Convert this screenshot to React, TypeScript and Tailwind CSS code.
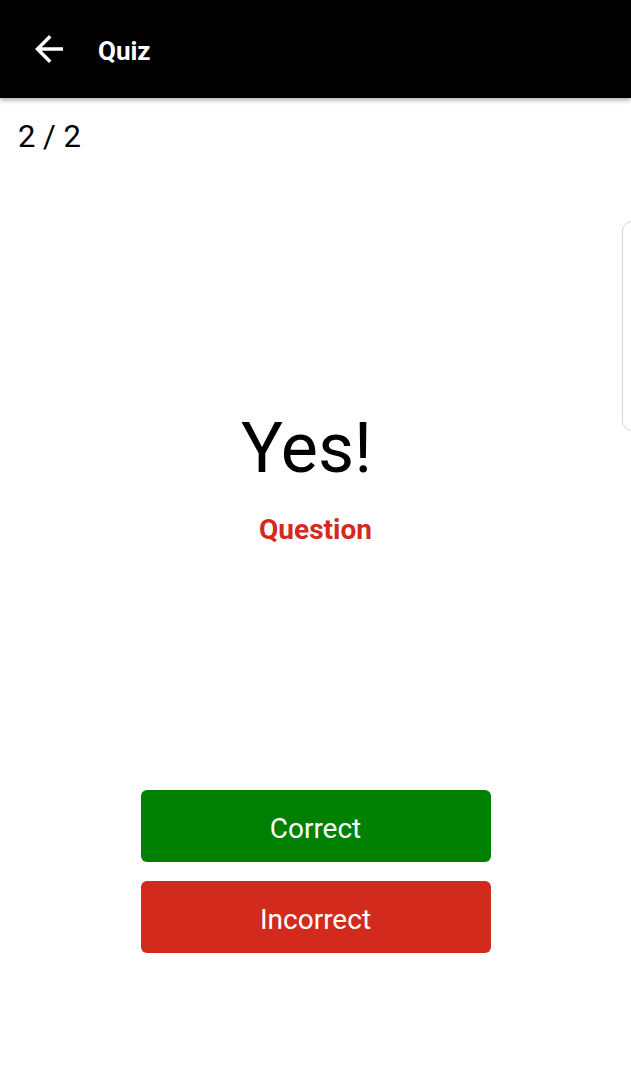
export default function App() {
    return (
        <div className="relative h-[1080px] w-[631px] overflow-hidden bg-white font-['Roboto',sans-serif]">
            <header className="relative z-10 flex h-[98px] items-center bg-black shadow-[0_2px_5px_rgba(0,0,0,0.35)]">
                <svg viewBox="0 0 24 24" className="ml-[28px] h-[42px] w-[42px] fill-white">
                    <path d="M20 11H7.83l5.59-5.59L12 4l-8 8 8 8 1.41-1.41L7.83 13H20v-2z" />
                </svg>
                <h1 className="ml-[28px] mt-[4px] text-[26px] font-bold text-white">Quiz</h1>
            </header>

            <div className="px-[18px] pt-[19px] text-[31px] leading-[40px] text-black">2 / 2</div>

            {/* next card peeking in from the right */}
            <div className="absolute left-[622px] top-[221px] h-[210px] w-[40px] rounded-[10px] border border-gray-300 bg-white" />

            <div className="mt-[249px] flex flex-col items-center">
                <div className="mr-[18px] text-[70px] leading-[84px] text-black">Yes!</div>
                <div className="mt-[23px] text-[28px] font-bold leading-[34px] text-[#d32a1e]">Question</div>
            </div>

            <div className="mt-[243px] flex flex-col items-center gap-[19px]">
                <button className="h-[72px] w-[350px] rounded-[6px] bg-[#008000] pt-[5px] text-[28px] text-white">Correct</button>
                <button className="h-[72px] w-[350px] rounded-[6px] bg-[#d32a1e] pt-[5px] text-[28px] text-white">Incorrect</button>
            </div>
        </div>
    );
}
